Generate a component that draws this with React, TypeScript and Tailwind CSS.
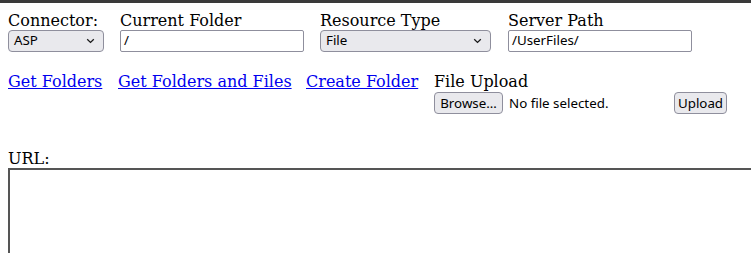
import React from "react";

function Chevron() {
  return (
    <svg width="9" height="6" viewBox="0 0 9 6" className="shrink-0">
      <path d="M1.2 1.2 L4.5 4.4 L7.8 1.2" fill="none" stroke="#1a1a1a" strokeWidth="1.3" />
    </svg>
  );
}

function Select({ value, width }: { value: string; width: string }) {
  return (
    <div
      className={`${width} h-[22px] flex items-center justify-between rounded-[4px] border border-[#8f8f9d] bg-[#e9e9ed] pl-[5px] pr-[8px] text-[13.33px] text-black font-['Noto_Sans',sans-serif]`}
    >
      <span>{value}</span>
      <Chevron />
    </div>
  );
}

function Input({ value, width }: { value: string; width: string }) {
  return (
    <div
      className={`${width} h-[22px] flex items-center rounded-[2px] border border-[#8f8f9d] bg-white px-[3px] text-[13.33px] text-black font-['Noto_Sans',sans-serif]`}
    >
      {value}
    </div>
  );
}

function Btn({ children, width }: { children: React.ReactNode; width: string }) {
  return (
    <div
      className={`${width} h-[22px] flex items-center justify-center rounded-[4px] border border-[#8f8f9d] bg-[#e9e9ed] text-[13.33px] text-black font-['Noto_Sans',sans-serif]`}
    >
      {children}
    </div>
  );
}

export default function App() {
  return (
    <div className="w-[751px] h-[253px] overflow-hidden bg-white font-['DejaVu_Serif',serif] text-[16px] text-black">
      <div className="h-[3px] bg-[#3a3a3a]" />
      <div className="flex pl-[8px] pt-[8px]">
        <div className="flex flex-col w-[112px]">
          <div className="leading-[19px]">Connector:</div>
          <Select value="ASP" width="w-[96px]" />
        </div>
        <div className="flex flex-col w-[200px]">
          <div className="leading-[19px]">Current Folder</div>
          <Input value="/" width="w-[184px]" />
        </div>
        <div className="flex flex-col w-[188px]">
          <div className="leading-[19px]">Resource Type</div>
          <Select value="File" width="w-[171px]" />
        </div>
        <div className="flex flex-col">
          <div className="leading-[19px]">Server Path</div>
          <Input value="/UserFiles/" width="w-[184px]" />
        </div>
      </div>
      <div className="flex items-start pl-[8px] pt-[20px] leading-[19px]">
        <div className="w-[110px] leading-[19px]">
          <a href="#" className="text-[#0000ee] underline">Get Folders</a>
        </div>
        <div className="w-[188px] leading-[19px]">
          <a href="#" className="text-[#0000ee] underline">Get Folders and Files</a>
        </div>
        <div className="w-[128px] leading-[19px]">
          <a href="#" className="text-[#0000ee] underline">Create Folder</a>
        </div>
        <div className="flex flex-col">
          <div className="leading-[19px] h-[20px]">File Upload</div>
          <div className="flex items-center">
            <Btn width="w-[69px]">Browse…</Btn>
            <span className="ml-[6px] w-[165px] text-[13.33px] font-['Noto_Sans',sans-serif]">No file selected.</span>
            <Btn width="w-[53px]">Upload</Btn>
          </div>
        </div>
      </div>
      <div className="pl-[8px] pt-[35px]">
        <div className="leading-[19px]">URL:</div>
        <div className="w-[800px] h-[120px] border-2 border-[#555555] bg-white" />
      </div>
    </div>
  );
}
